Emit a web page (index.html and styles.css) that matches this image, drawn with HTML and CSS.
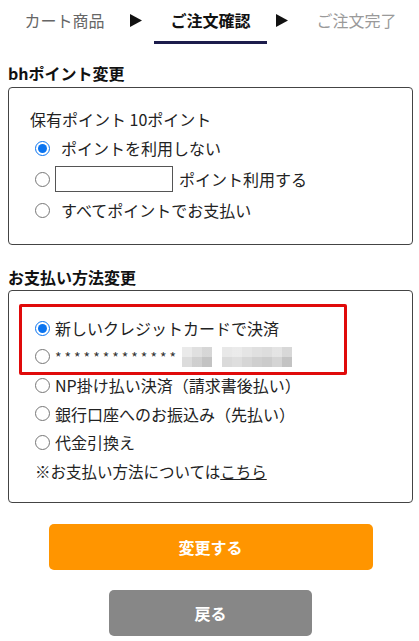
FILE: index.html
```html
<!DOCTYPE html>
<html lang="ja">
<head>
<meta charset="utf-8">
<title>ご注文確認</title>
<link rel="stylesheet" href="styles.css">
</head>
<body>
<div class="page">
  <nav class="steps">
    <div class="step step-done">カート商品</div>
    <div class="arrow"><svg width="12" height="13" viewBox="0 0 12 13"><polygon points="0,0 12,6.5 0,13" fill="#111"/></svg></div>
    <div class="step step-active">ご注文確認</div>
    <div class="arrow"><svg width="12" height="13" viewBox="0 0 12 13"><polygon points="0,0 12,6.5 0,13" fill="#111"/></svg></div>
    <div class="step step-todo">ご注文完了</div>
  </nav>

  <h2 class="sec-title first">bhポイント変更</h2>
  <div class="box box-points">
    <p class="owned">保有ポイント 10ポイント</p>
    <label class="opt"><input type="radio" name="pt" checked><span class="lbl spaced">ポイントを利用しない</span></label>
    <label class="opt opt-tall"><input type="radio" name="pt"><input type="text" class="pt-input"><span class="lbl">ポイント利用する</span></label>
    <label class="opt"><input type="radio" name="pt"><span class="lbl spaced">すべてポイントでお支払い</span></label>
  </div>

  <h2 class="sec-title">お支払い方法変更</h2>
  <div class="box box-pay">
    <label class="opt row"><input type="radio" name="pay" checked><span class="lbl">新しいクレジットカードで決済</span></label>
    <label class="opt row"><input type="radio" name="pay"><span class="lbl stars">*************</span><span class="blur b1"></span><span class="blur b2"></span></label>
    <label class="opt row"><input type="radio" name="pay"><span class="lbl">NP掛け払い決済（請求書後払い）</span></label>
    <label class="opt row"><input type="radio" name="pay"><span class="lbl">銀行口座へのお振込み（先払い）</span></label>
    <label class="opt row"><input type="radio" name="pay"><span class="lbl">代金引換え</span></label>
    <p class="note row">※お支払い方法については<a href="#" class="link">こちら</a></p>
    <div class="highlight"></div>
  </div>

  <button class="btn btn-primary" type="button">変更する</button>
  <button class="btn btn-back" type="button">戻る</button>
</div>
</body>
</html>
```

FILE: styles.css
```css
* { box-sizing: border-box; }
html, body { margin: 0; padding: 0; background: #fff; }
body {
  font-family: "Noto Sans CJK JP", "Noto Sans", sans-serif;
  color: #222;
  font-size: 16px;
}
.page { padding: 0 6px 0 8px; }

.steps { display: flex; height: 44px; }
.step {
  width: 113px;
  height: 44px;
  padding-top: 8px;
  line-height: 24px;
  text-align: center;
  font-size: 16px;
}
.step-done { color: #666; }
.step-todo { color: #9a9a9a; }
.step-active { color: #111; font-weight: 700; border-bottom: 3px solid #1c1c4c; }
.arrow {
  flex: 1;
  display: flex;
  justify-content: center;
  padding-top: 14px;
  padding-right: 4px;
}
.arrow svg { display: block; }

.sec-title {
  margin: 21px 0 2px;
  font-size: 16px;
  line-height: 22px;
  font-weight: 700;
  color: #111;
}
.sec-title.first { margin-top: 18px; margin-bottom: 3px; }

.box {
  border: 1px solid #444;
  border-radius: 4px;
}
.box-points { padding: 16px 10px 20px 21px; }
.owned { margin: 0; line-height: 30px; font-size: 16px; color: #222; }

.opt {
  display: flex;
  align-items: center;
  height: 28px;
  font-size: 16px;
  color: #222;
}
.box-points .opt { margin-left: 5px; }
.opt-tall { height: 34px; }
.opt input[type="radio"] {
  width: 15px;
  height: 15px;
  margin: 0 5px 0 0;
  accent-color: #0a74f0;
  flex: none;
}
.lbl { white-space: nowrap; }
.lbl.spaced { margin-left: 6px; }
.pt-input {
  width: 118px;
  height: 26px;
  border: 1px solid #555;
  border-radius: 0;
  margin: 0 6px 0 0;
  padding: 0;
  font: inherit;
}

.box-pay {
  position: relative;
  padding: 23px 10px 17px 26px;
}
.box-pay .row { height: 28.5px; }
.stars { font-size: 14px; letter-spacing: 3px; color: #333; }
.blur {
  display: inline-block;
  height: 20px;
  background:
    linear-gradient(180deg, rgba(255,255,255,0.25) 0 50%, rgba(0,0,0,0.03) 50% 100%),
    linear-gradient(90deg, #e3e3e3 0 10px, #d6d6d6 10px 20px, #c9c9c9 20px 30px, #dcdcdc 30px 40px, #d2d2d2 40px 50px, #cbcbcb 50px 60px, #c6c6c6 60px 70px);
}
.b1 { width: 30px; margin-left: 3px; }
.b2 { width: 70px; margin-left: 10px;
  background:
    linear-gradient(180deg, rgba(255,255,255,0.3) 0 50%, rgba(0,0,0,0.02) 50% 100%),
    linear-gradient(90deg, #dedede 0 10px, #e2e2e2 10px 20px, #dadada 20px 30px, #d3d3d3 30px 40px, #cfcfcf 40px 50px, #d8d8d8 50px 60px, #c7c7c7 60px 70px);
}
.note {
  margin: 0;
  display: flex;
  align-items: center;
  font-size: 15.5px;
  color: #222;
}
.link { color: #222; text-decoration: underline; }

.highlight {
  position: absolute;
  left: 10px;
  top: 13px;
  width: 328px;
  height: 71px;
  border: 3px solid #e00a0a;
  border-radius: 2px;
  pointer-events: none;
}

.btn {
  display: block;
  margin: 0 auto;
  height: 46px;
  border: none;
  border-radius: 5px;
  color: #fff;
  font-family: inherit;
  font-size: 16px;
  font-weight: 700;
}
.btn-primary { width: 324px; margin-top: 21px; background: #ff9500; }
.btn-back { width: 203px; margin-top: 20px; background: #878787; }
```
